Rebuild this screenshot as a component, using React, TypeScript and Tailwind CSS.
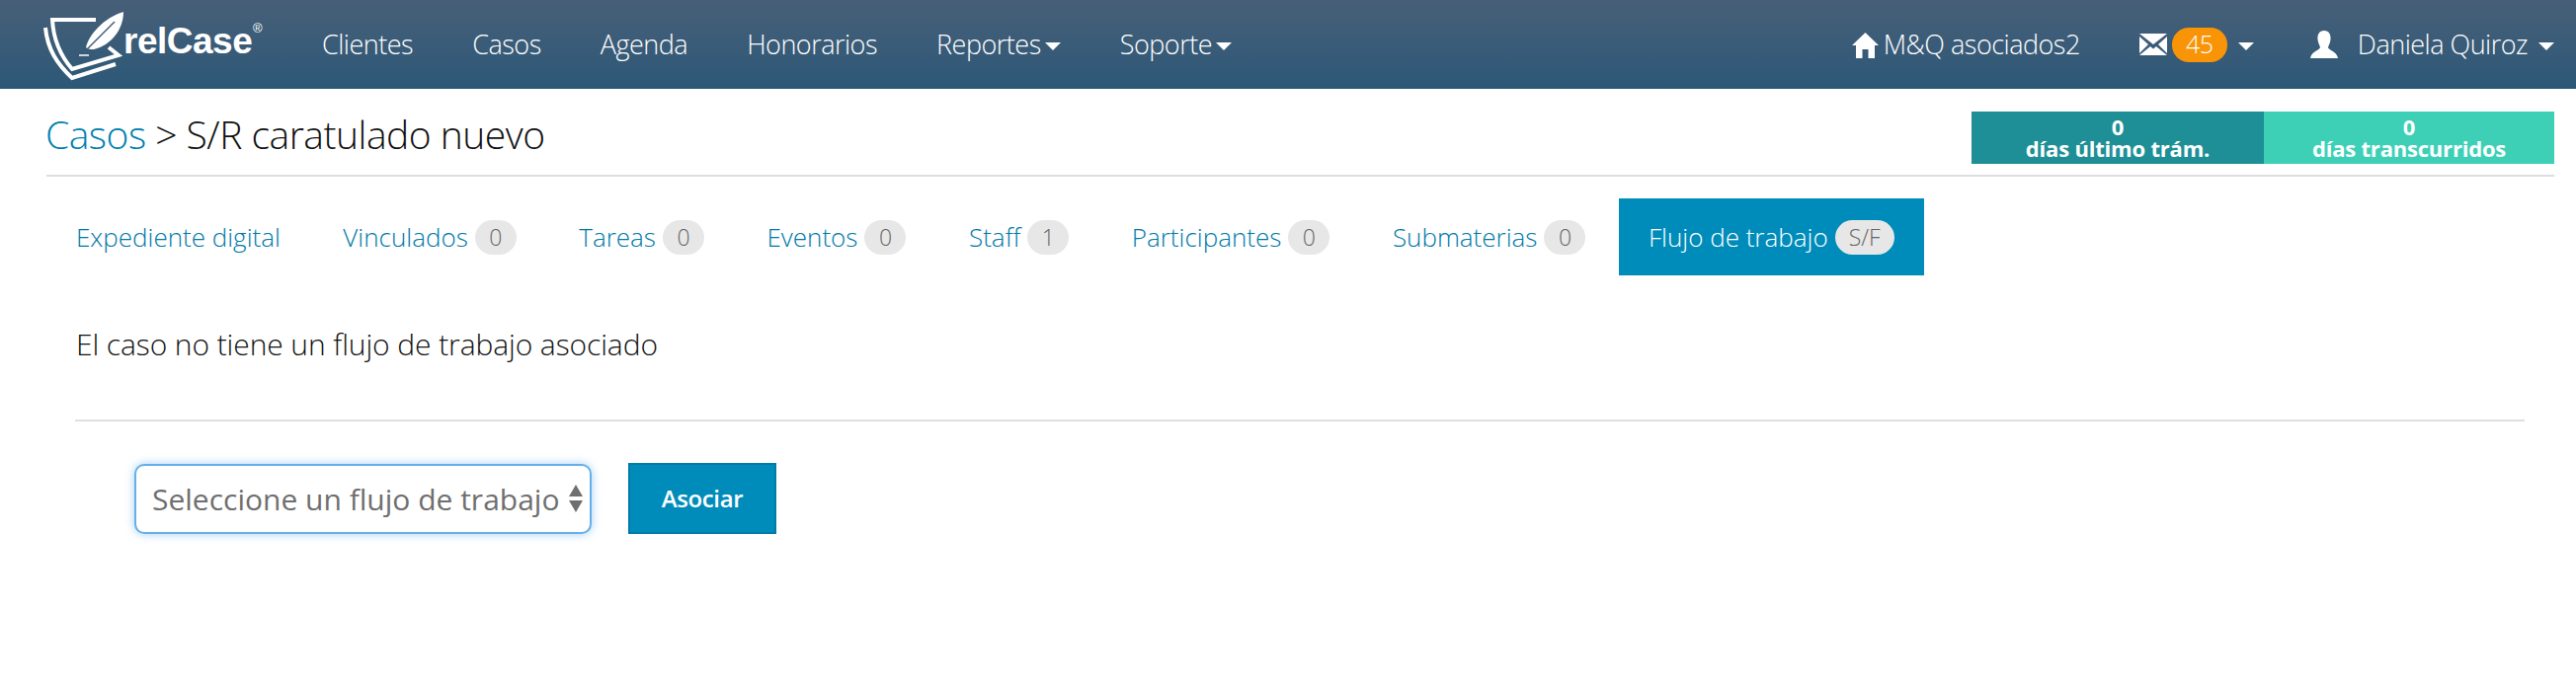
const navLinks = [
  { label: 'Clientes' },
  { label: 'Casos' },
  { label: 'Agenda' },
  { label: 'Honorarios' },
  { label: 'Reportes', caret: true },
  { label: 'Soporte', caret: true },
];

const tabs = [
  { label: 'Expediente digital' },
  { label: 'Vinculados', count: '0' },
  { label: 'Tareas', count: '0' },
  { label: 'Eventos', count: '0' },
  { label: 'Staff', count: '1' },
  { label: 'Participantes', count: '0' },
  { label: 'Submaterias', count: '0' },
  { label: 'Flujo de trabajo', count: 'S/F', active: true },
];

function Caret({ className = '' }: { className?: string }) {
  return <span className={`inline-block border-x-[8px] border-t-[8px] border-x-transparent border-t-white ${className}`} />;
}

function Logo() {
  return (
    <div className="relative w-[280px] h-[90px] shrink-0">
      <svg width="90" height="80" viewBox="40 5 90 80" className="absolute left-[-6px] top-[5px]">
        <path d="M97 20 H53 C54 40 60 55 73 70 L120 56 L110 48" stroke="#fff" strokeWidth="4" fill="none" />
        <path d="M46 28 C48 50 58 65 73 79 L117 65" stroke="#fff" strokeWidth="4" fill="none" />
        <path d="M87 48 C90 35 105 18 125 12 C125 30 112 46 95 50 C92 50 89 50 87 48Z" fill="#fff" />
        <path d="M85 53 L116 22" stroke="#3d5c79" strokeWidth="1.5" fill="none" />
        <path d="M80 56 H90" stroke="#fff" strokeWidth="1.5" />
      </svg>
      <span className="absolute left-[79px] top-[21px] text-[37px] leading-[42px] font-bold text-white font-['Liberation_Sans',sans-serif]">relCase</span>
      <span className="absolute left-[210px] top-[21px] text-[13px] leading-[16px] text-white font-['Liberation_Sans',sans-serif]">®</span>
    </div>
  );
}

function HomeIcon() {
  return (
    <svg width="27" height="27" viewBox="0 0 27 27" className="shrink-0">
      <path d="M13.5 1 L27 14 H23 V27 H16.5 V18 H10.5 V27 H4 V14 H0Z" fill="#fff" />
    </svg>
  );
}

function MailIcon() {
  return (
    <svg width="28" height="24" viewBox="0 0 28 24" className="shrink-0">
      <path d="M0 1 H28 L14 12Z M0 4 L9 12 L0 21Z M28 4 L19 12 L28 21Z M0 23 L11 14 L14 16.5 L17 14 L28 23Z" fill="#fff" />
    </svg>
  );
}

function UserIcon() {
  return (
    <svg width="28" height="28" viewBox="0 0 28 28" className="shrink-0">
      <path d="M14 0 C19 0 21 4 20.5 9 C20 13 18.5 15 18 17 C18.5 20 27 21 28 28 H0 C1 21 9.5 20 10 17 C9.5 15 8 13 7.5 9 C7 4 9 0 14 0Z" fill="#fff" />
    </svg>
  );
}

function Header() {
  return (
    <header className="flex items-center h-[90px] pl-[46px] pr-[22px] bg-gradient-to-b from-[#475f78] to-[#2b5877] text-white text-[27px] font-light tracking-[-0.5px]">
      <Logo />
      <nav className="flex items-center gap-[60px]">
        {navLinks.map((link) => (
          <a key={link.label} className="flex items-center gap-[4px]">
            {link.label}
            {link.caret && <Caret className="mt-[3px]" />}
          </a>
        ))}
      </nav>
      <div className="flex items-center ml-auto">
        <HomeIcon />
        <span className="ml-[5px]">M&Q asociados2</span>
        <span className="ml-[60px]"><MailIcon /></span>
        <span className="ml-[5px] flex items-center justify-center w-[56px] h-[35px] rounded-[17px] bg-[#f89406] text-[25px]">45</span>
        <Caret className="ml-[11px] mt-[3px]" />
        <span className="ml-[57px]"><UserIcon /></span>
        <span className="ml-[20px]">Daniela Quiroz</span>
        <Caret className="ml-[11px] mt-[3px]" />
      </div>
    </header>
  );
}

function TitleRow() {
  return (
    <div className="flex items-start justify-between h-[89px] ml-[47px] mr-[22px] border-b-2 border-[#dedede] pt-[23px]">
      <h1 className="-ml-[1px] text-[39px] leading-[46px] font-light text-[#111] tracking-[-0.5px]">
        <a className="text-[#0080b0]">Casos</a> &gt; S/R caratulado nuevo
      </h1>
      <div className="flex text-white font-bold text-[22px] leading-[22px] text-center tracking-[-0.2px]">
        <div className="w-[296px] h-[53px] pt-[4px] bg-[#1e8f96]">0<br />días último trám.</div>
        <div className="w-[294px] h-[53px] pt-[4px] bg-[#3dd0b7]">0<br />días transcurridos</div>
      </div>
    </div>
  );
}

function Tabs() {
  return (
    <div className="flex mt-[22px] ml-[47px] h-[78px] text-[26px] font-light">
      {tabs.map((tab) => (
        <a
          key={tab.label}
          className={`flex items-center gap-[7px] px-[30px] mr-[3.5px] ${tab.active ? 'bg-[#008cba] text-white' : 'text-[#007aa8]'}`}
        >
          {tab.label}
          {tab.count && (
            <span className={`flex items-center justify-center min-w-[42px] h-[35px] rounded-[18px] bg-[#e7e7e7] text-[#666] text-[23px] ${tab.active ? 'px-[14px]' : 'px-[11px]'}`}>
              {tab.count}
            </span>
          )}
        </a>
      ))}
    </div>
  );
}

export default function App() {
  return (
    <div className="min-h-[696px] bg-white text-[#111] font-['Open_Sans',sans-serif]">
      <Header />
      <TitleRow />
      <Tabs />
      <p className="mt-[52px] ml-[77px] text-[30px] leading-[36px] font-light tracking-[-0.1px]">El caso no tiene un flujo de trabajo asociado</p>
      <hr className="mt-[58px] ml-[76px] mr-[52px] border-t-2 border-[#e0e0e0]" />
      <div className="flex items-center mt-[42px] ml-[136px]">
        <div className="flex items-center w-[463px] h-[71px] pl-[16px] pr-[6px] rounded-[10px] border-2 border-[#66afe9] bg-white shadow-[0_0_10px_rgba(102,175,233,0.6)] text-[#6f6f6f] text-[30px]">
          <span className="flex-1 whitespace-nowrap">Seleccione un flujo de trabajo</span>
          <svg width="16" height="32" viewBox="0 0 16 32" className="shrink-0">
            <path d="M8 2 L15 14 H1Z M8 30 L15 18 H1Z" fill="#6f6f6f" />
          </svg>
        </div>
        <button className="ml-[37px] w-[150px] h-[72px] bg-[#008cba] border-2 border-[#007ca6] text-white text-[24px] font-semibold tracking-[-0.4px]">
          Asociar
        </button>
      </div>
    </div>
  );
}
